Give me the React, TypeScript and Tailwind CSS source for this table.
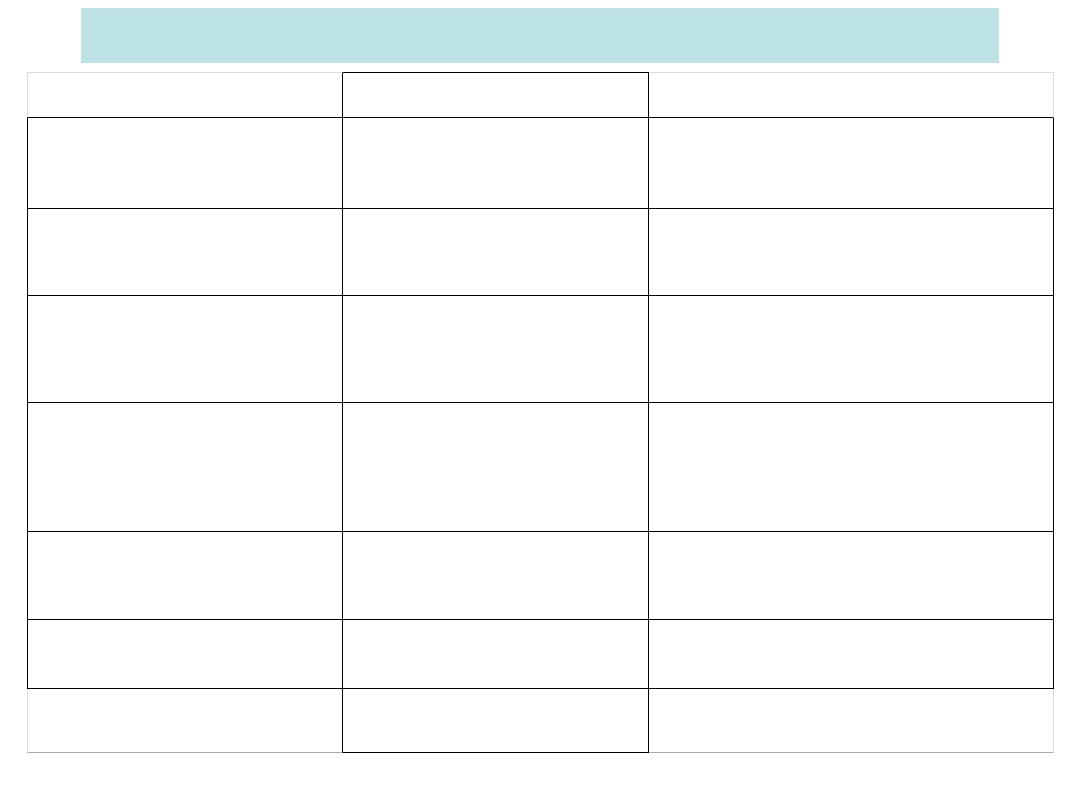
const rowHeights = [46, 91, 87, 107, 129, 88, 69, 64];

function Row({ height, index, last }: { height: number; index: number; last: boolean }) {
  const first = index === 0;
  const edge = first || last;
  return (
    <div className="flex" style={{ height }}>
      <div
        className={
          "w-[316px] border-l border-r border-b border-r-black " +
          (first ? "border-t border-t-[#dcdcdc] " : "") +
          (edge ? "border-l-[#dcdcdc] " : "border-l-black ") +
          (last ? "border-b-[#aaaaaa]" : "border-b-black")
        }
      />
      <div
        className={
          "w-[306px] border-r border-b border-black " + (first ? "border-t" : "")
        }
      />
      <div
        className={
          "w-[405px] border-r border-b " +
          (first ? "border-t border-t-[#dcdcdc] " : "") +
          (edge ? "border-r-[#dcdcdc] " : "border-r-black ") +
          (last ? "border-b-[#aaaaaa]" : "border-b-black")
        }
      />
    </div>
  );
}

export default function App() {
  return (
    <div className="h-[810px] w-[1080px] bg-white pt-[8px]">
      <div className="ml-[81px] h-[55px] w-[918px] bg-[#bce2e3]" />
      <div className="ml-[27px] mt-[9px] flex w-[1027px] flex-col">
        {rowHeights.map((h, i) => (
          <Row key={i} height={h} index={i} last={i === rowHeights.length - 1} />
        ))}
      </div>
    </div>
  );
}
